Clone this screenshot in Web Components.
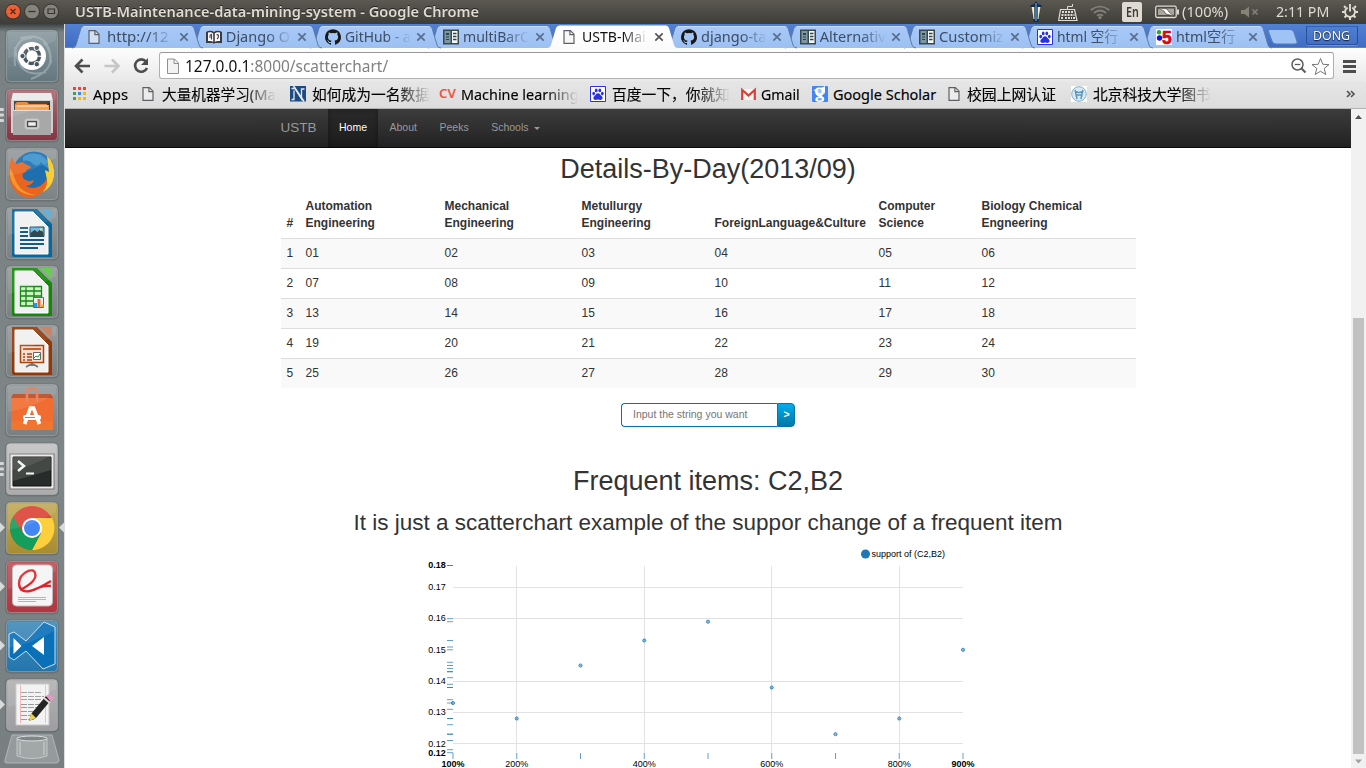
<!DOCTYPE html>
<html lang="en">
<head>
<meta charset="utf-8">
<title>USTB-Maintenance-data-mining-system</title>
<style>
html,body{margin:0;height:768px;overflow:hidden}
body{width:1366px;font-family:"Liberation Sans",Arial,sans-serif;background:#fff}
</style>
</head>
<body>
<desktop-shell></desktop-shell>
<script>
const UI = '"Noto Sans","Noto Sans CJK SC",sans-serif';
function define(name, html, ready) {
  customElements.define(name, class extends HTMLElement {
    constructor() {
      super();
      this.attachShadow({ mode: 'open' });
    }
    connectedCallback() {
      this.shadowRoot.innerHTML = typeof html === 'function' ? html(this) : html;
      if (ready) ready(this, this.shadowRoot);
    }
  });
}

/* Text squeezed or stretched horizontally to the width in its "w" attribute. */
define('fit-text', el => `<style>
:host{display:block;width:${el.getAttribute('w')}px;white-space:pre;flex:none}
span{display:inline-block;transform-origin:0 50%}
</style><span><slot></slot></span>`, (el, root) => {
  const s = root.querySelector('span');
  s.style.transform = `scaleX(${+el.getAttribute('w') / s.offsetWidth})`;
});

const DOC = `<path d="M2 1.600h6.400l3.600 3.600v9.200H2z" fill="#f4f4f4" fill-opacity=".6" stroke="#5f6063" stroke-width="1.200"/><path d="M7.900 1.600v4H12" fill="none" stroke="#5f6063" stroke-width="1.200"/>`;
const ICONS = {
  doc: DOC,
  book: `<path d="M0 3l2-1q4-1 6 1 2-2 6-1l2 1v11H9l-1 1-1-1H0z" fill="#393c40"/><path d="M2 3.500q3.500-1 5.200 1v8.200q-2-1.200-5.200-.6zM14 3.500q-3.500-1-5.200 1v8.200q2-1.200 5.200-.6z" fill="#fff"/><path d="M3.500 6.500l2-1v5M3 8h2M10.500 6q2-1 2 1t-1.500 3" stroke="#444" stroke-width="1.200" fill="none"/>`,
  github: `<path fill="#181818" d="M8 .2a8 8 0 0 0-2.530 15.590c.4.070.550-.170.550-.380v-1.490c-2.230.480-2.690-.950-2.690-.950-.360-.920-.890-1.170-.890-1.170-.730-.500.050-.490.050-.490.810.060 1.230.830 1.230.830.720 1.230 1.880.870 2.340.670.070-.520.280-.870.510-1.070-1.780-.200-3.640-.890-3.640-3.950 0-.870.310-1.590.820-2.150-.080-.200-.360-1.020.080-2.120 0 0 .670-.210 2.200.820a7.600 7.600 0 0 1 4 0c1.530-1.040 2.200-.820 2.200-.820.440 1.100.160 1.920.080 2.120.510.560.820 1.270.820 2.150 0 3.070-1.870 3.750-3.650 3.950.290.250.540.730.540 1.480v2.190c0 .210.150.460.550.380A8 8 0 0 0 8 .2z"/>`,
  panel: `<path d="M0 .5h16v15H0z" fill="#3a484d"/><path d="M1.500 2h6v12h-6z" fill="#7b98a2"/><path d="M9 2h5.500v12H9z" fill="#f4fafa"/><path d="M3 4h3v2H3zM3 7.500h3v1H3zM3 10h3v1H3z" fill="#33434a"/><path d="M10 4.500h3.500M10 7.500h3.500M10 10.500h3.500" stroke="#33434a" stroke-width="1.300"/>`,
  baidu: `<path d="M.5.5h15v15H.5z" fill="#fff" stroke="#2932e1"/><g fill="#2932e1"><ellipse cx="3.700" cy="7.600" rx="1.400" ry="1.800"/><ellipse cx="6.200" cy="4.400" rx="1.400" ry="1.900"/><ellipse cx="9.800" cy="4.400" rx="1.400" ry="1.900"/><ellipse cx="12.300" cy="7.600" rx="1.400" ry="1.800"/><path d="M8 7.200c2 0 2.500 2 4 3.300 1.300 1.500.5 3.400-1.500 3.400-1 0-1.500-.4-2.500-.4s-1.500.4-2.500.4c-2 0-2.800-1.900-1.500-3.400C5.500 9.200 6 7.200 8 7.200z"/></g>`,
  five: `<path d="M0 0h16v16H0z" fill="#fff"/><circle cx="3" cy="3.200" r="2.200" fill="#33a532"/><circle cx="3.500" cy="9" r="2.700" fill="#1111e8"/><text x="6" y="15" font-family="Liberation Sans" font-size="17.500" font-weight="bold" fill="#d40a14" stroke="#d40a14" stroke-width=".7">5</text>`,
  apps: ['#e8453c','#e8453c','#e8453c','#35a853','#4285f4','#fbb605','#35a853','#fbb605','#fbb605'].map((c, i) => `<path d="M${i % 3 * 5} ${1 + (i / 3 | 0) * 5}h3v3h-3z" fill="${c}"/>`).join(''),
  nn: `<path d="M0 0h16v15.500H0z" fill="#1d4a80"/><path d="M1.500 2.500h3.500l6.500 10.500V3h3M1.500 13.500h2.500v-9" fill="none" stroke="#dfe9f3" stroke-width="1.300"/><path d="M3.500 0L14 15.500" stroke="#dfe9f3" stroke-width="1.600"/>`,
  cv: `<text x="-1" y="12.300" font-family="Noto Sans" font-style="normal" font-weight="600" font-size="12.500" textLength="17" lengthAdjust="spacingAndGlyphs" fill="#f4513c">CV</text>`,
  gmail: `<path d="M0 3h15v11H0z" fill="#f4f4f4"/><path d="M1.200 14V4l6.300 5.500L13.800 4v10" fill="none" stroke="#d54136" stroke-width="2.200"/>`,
  scholar: `<rect width="16" height="16" rx="1" fill="#4285f4"/><path d="M1.500 4.500L5.500 1.500H10L13 0v8l-1-1.500-.5-2Q13 8.500 9.500 9.800l2.500 1.700q1.500 4.500-4.500 4.500-5.500-.5-4-3.500 1-2 3.700-2.200-4.200-.3-4.200-5.300z" fill="#fff"/><path d="M5.500 4q2-2.500 4 0 .7 3-1.500 3.500Q5.700 7.500 5.500 4z" fill="#9fc3fa"/><ellipse cx="7.700" cy="13.300" rx="2.200" ry="1.300" fill="#6fa4f8"/>`,
  lib: `<path d="M0 0h16v16H0z" fill="#fff"/><circle cx="8" cy="8" r="7.300" fill="#d9e9f3" stroke="#85afcb"/><path d="M4 4l1 4 1 5M12 4l-1 4-1 5M4.500 5.500q3.500 2 7 0M5 9h6" stroke="#5b96b8" stroke-width="1.500" fill="none"/>`
};
define('site-icon', el => `<style>:host{display:block;width:16px;height:16px;flex:none}svg{display:block;overflow:visible}</style><svg width="16" height="16">${ICONS[el.getAttribute('name')]}</svg>`);

/* ---- Top panel ---- */
define('top-panel', `<style>
:host{display:flex;height:24px;flex:none;align-items:center;background:linear-gradient(#5b5951,#3d3c37);color:#dfdbd2;font:15px/22px ${UI}}
.wm{width:75px;display:flex;gap:3px;padding-left:5px;box-sizing:border-box}
.title{font-weight:600;font-size:14.500px;flex:1;height:24px;text-shadow:0 -1px #222}
svg{display:block}
.i{display:flex;align-items:center;height:24px}
fit-text{height:24px}
.en{width:20px;height:20px;background:#dfdbd2;border-radius:2px;color:#3c3b37;font:600 14px/20px ${UI};display:flex;justify-content:center}
</style>
<div class="wm">
<svg width="16" height="24"><circle cx="8" cy="11.500" r="7.500" fill="#ed5f34" stroke="#36322e"/><path d="M5.500 9l5 5M10.500 9l-5 5" stroke="#532a1c" stroke-width="1.300"/></svg>
<svg width="16" height="24"><circle cx="8" cy="11.500" r="7.500" fill="#85837c" stroke="#34332f"/><path d="M4.500 11.500h7" stroke="#35342f" stroke-width="1.300"/></svg>
<svg width="16" height="24"><circle cx="8" cy="11.500" r="7.500" fill="#85837c" stroke="#34332f"/><path d="M5 9h6.500v4.500H5z" fill="none" stroke="#35342f" stroke-width="1.200"/></svg>
</div>
<div class="title"><fit-text w="404.500">USTB-Maintenance-data-mining-system - Google Chrome</fit-text></div>
<div class="i" style="width:28px"><svg width="13" height="24"><path d="M6 1l2 3 4 1.500L10.500 9 8.500 22h-5L1.500 9 0 5.500 4 4z" fill="#122d50"/><path d="M1.800 7l2.200 12V7M8 7v12l2.200-12" fill="#f8f0c4" stroke="#f8f0c4" stroke-width=".6"/><path d="M6 3v18" stroke="#4f88b9" stroke-width="1.600"/></svg></div>
<div class="i" style="width:32px"><svg width="20" height="24" fill="none" stroke="#dfdbd2"><path d="M2.500 9.500h14l2.500 11H.7z" stroke-width="1.200"/><path d="M9.500 9V6.500h5V4" /><path d="M4 12h12M3.500 15h13M3 18h3M7 18h7M15 18h2" stroke-dasharray="2 1" stroke-width="1.800"/></svg></div>
<div class="i" style="width:32px"><svg width="20" height="24" fill="none" stroke="#85827a" stroke-width="1.700"><path d="M.8 10Q10 3 19.200 10M4 13q6-5 12 0M7 15.800q3-2.500 6 0"/><circle cx="10" cy="17.600" r=".8"/></svg></div>
<div class="i" style="width:33px"><div class="en"><fit-text w="13">En</fit-text></div></div>
<div class="i" style="width:27px"><svg width="24" height="24"><rect x=".7" y="6.200" width="20.500" height="11.300" rx="1.500" fill="#4b4943" stroke="#dfdbd2" stroke-width="1.300"/><path d="M3 8.500h16v6.500H3z" fill="#a9a69e"/><path d="M22 9.500h2v5h-2z" fill="#dfdbd2"/><path d="M3 8l9 1 2 3 5 4-8-2-2-3z" fill="#fff" stroke="#4b4943" stroke-width=".7"/></svg></div>
<div class="i" style="width:59px"><fit-text w="46">(100%)</fit-text></div>
<div class="i" style="width:35px"><svg width="18" height="24"><path d="M0 10h3.500L8 6.500v11L3.500 14H0z" fill="#85827a"/><path d="M11.500 9.500l5 5M16.500 9.500l-5 5" stroke="#85827a" stroke-width="1.600"/></svg></div>
<div class="i" style="width:66px"><fit-text w="53">2:11 PM</fit-text></div>
<div class="i" style="width:24px"><svg width="17" height="24" fill="none" stroke="#dfdbd2"><path d="M5.600 7.600a5 5 0 1 0 4.800 0" stroke-width="1.900"/><path d="M8 4v7.500" stroke-width="1.900"/><path d="M12.300 7.700l1.600-1.600M3.700 7.700L2.100 6.100M13.300 12H16M2.700 12H0M11.500 15.500l2 2M4.500 15.500l-2 2M8 17V20" stroke-width="2.100"/></svg></div>`);

/* ---- Launcher ---- */
const office = (c, light, inner) => `<path d="M6 2h23l17 17v31H8q-2 0-2-2z" fill="${c}"/><path d="M34 2h12v12z" fill="${light}"/><path d="M28 2h6l12 12v5z" fill="#8f9596"/><path d="M28 2l18 18v-3L31 2z" fill="${c}"/><path d="M9 5h18l15 15v27H9z" fill="#f0f0f0" stroke="#fff"/>${inner}`;
const APPS = [
  ['#8b9ba1','#64777f', `<g fill="none" stroke="#b5c0c3" stroke-width="2" opacity=".55"><path d="M26 8Q6 7 9 36M9 17Q12 50 40 42M38 12Q56 38 25 49M14 8Q45 0 45 33"/></g><circle cx="26" cy="26" r="14" fill="#fff"/><circle cx="26" cy="26" r="7.500" fill="none" stroke="#49565c" stroke-width="3.400" stroke-dasharray="14.200 1.500" stroke-dashoffset="-.8"/><g fill="#49565c" stroke="#fff" stroke-width="1"><circle cx="16.500" cy="26" r="2.700"/><circle cx="30.800" cy="17.800" r="2.700"/><circle cx="30.800" cy="34.200" r="2.700"/></g>`, 0],
  ['#a76c76','#873441', `<path d="M7 4h38l2 8v32H5V12z" fill="#cfcfcf"/><path d="M7 4h38l1.500 7h-41z" fill="#eaeaea"/><path d="M8 12h36v9H8z" fill="#3c3430"/><path d="M11 13h10l2 2h18v7H9v-7z" fill="#e78130"/><path d="M9 16h34v5H9z" fill="#f7a04e"/><path d="M11 17h31" stroke="#fff0dc"/><path d="M7 21h38v25H7z" fill="#a8a8a8"/><path d="M7 21.500h38" stroke="#ddd"/><rect x="19" y="30" width="14" height="10" rx="2" fill="#ddd" stroke="#bebebe"/><path d="M21.500 32.500h9v5h-9z" fill="#eee" stroke="#4b4b4b" stroke-width="1.500"/>`, 3],
  ['#969b9d','#7d8385', `<circle cx="28" cy="24" r="20.500" fill="#1d6fb0"/><path d="M17 9q8-6 18-2 8 5 9 14-7-3-9-7-3 6-8 2-4-5-10-3z" fill="#3c93cb"/><path d="M41 8q9 8 7 21-2 10-11 15l4-12-2-10 4 2z" fill="#f8cd35"/><path d="M6 9q1 5 4 7l6-2 5 3q4 1 4 3-5 1-5 4-5 1-3 6 4 5 11 2-1 5-8 6 12 6 21-7 1 10-8 16-13 6-23-3-9-10-7-24 1-7 3-11z" fill="#e8641f"/><path d="M4 20q-2 12 7 21 8 7 19 6-16-2-21-16-2-6-5-11z" fill="#f5962e"/>`, 0],
  ['#969b9d','#7a8082', office('#0b6699','#5ca6cf', `<g stroke="#155a88" stroke-width="2"><path d="M14 21h8M14 25h8M14 29h8M14 33h24M14 37h24M14 41h18"/></g><path d="M24 20h14v9.500H24z" fill="#6dbbe5" stroke="#164c6e"/><path d="M24.500 29v-3l4-3 3 2 3-3 3 4v3z" fill="#34484d"/><circle cx="35" cy="22.500" r="1.300" fill="#f2df70"/>`), 0],
  ['#969b9d','#7a8082', office('#128a07','#58c842', `<path d="M14 20h22v20H14z" fill="#c9f7bd"/><path d="M14.500 20.500h21v19.500h-21zM14 25h22M14 30h22M14 35h22M20 20v20M28 20v20" fill="none" stroke="#18831b" stroke-width="1.300"/><path d="M27.500 31.500h10v10h-10z" fill="#eee" stroke="#666"/><path d="M28 37h3v4h-3z" fill="#209ae5"/><path d="M31.500 33h3v8h-3z" fill="#e96b2a"/><path d="M35 38.500h2.500v2.500H35z" fill="#e8b90b"/>`), 0],
  ['#969b9d','#7a8082', office('#923909','#c4795a', `<path d="M14.500 20.500h23v17h-23z" fill="#f6ded1" stroke="#a9430e" stroke-width="1.500"/><path d="M17 24h18" stroke="#c6602c" stroke-width="2"/><path d="M17 29h2M17 32h2M17 35h2M21 29h5M21 32h5M21 35h5" stroke="#a44214" stroke-width="1.700"/><path d="M27.500 27.500h7v7h-7z" fill="#fff" stroke="#666"/><path d="M28 33l2-2 2 1 2-3" fill="none" stroke="#139a24"/><path d="M26 38v3M25 39l-5 3M27 39l5 3" stroke="#777" stroke-width="2"/>`), 0],
  ['#969b9d','#7a8082', `<path d="M7 10h38l2 4H5z" fill="#b94a26"/><path d="M5 14h42v32H5z" fill="#f16c30"/><path d="M5 37h42v9H5z" fill="#f0752e"/><path d="M21 18V9q0-4.500 5-4.500T31 9v9" fill="none" stroke="#e57853" stroke-width="2.600"/><path d="M18.500 40l6-16h3l6 16" fill="none" stroke="#fff" stroke-width="3.700"/><rect x="17" y="31" width="18" height="5" rx="2" fill="#fff"/><path d="M19 33.500h10" stroke="#e97039"/>`, 0],
  ['#c3c3c3','#acacac', `<rect x="4" y="11" width="44" height="35" fill="#e8e8e8" stroke="#777"/><path d="M7 14h38v29H7z" fill="#272b29" stroke="#111"/><path d="M7 14h38v13L7 38z" fill="#626562" opacity=".5"/><path d="M12 18l6 5-6 5" fill="none" stroke="#f5f5f5" stroke-width="2.500"/><path d="M20 30.500h8" stroke="#f5f5f5" stroke-width="2"/>`, 3],
  ['#c2ad5b','#a68c32', `<circle cx="26" cy="26" r="22" fill="#dc4437"/><path d="M26 16h20a22 22 0 0 1-20 32l9-17z" fill="#fdd03b"/><path d="M7 15A22 22 0 0 0 26 48l9-17-9 4-9-4z" fill="#159e5b"/><circle cx="26" cy="26" r="10" fill="#fff"/><circle cx="26" cy="26" r="8" fill="#4387f4"/>`, 1, 1],
  ['#bd555c','#b03540', `<rect x="6.500" y="4" width="40" height="41" rx="4" fill="#f5f5f5" stroke="#bbb"/><path d="M12 36.500h28M12 38.500h28M12 40.500h18" stroke="#b5b5b5"/><path d="M14 29q18-9 15-17-1-4-7-2-9 4-9 13 1 9 11 7 6-1 21-10M27 29q10-5 18-4" fill="none" stroke="#df252e" stroke-width="2.400"/>`, 1],
  ['#438dba','#2376ad', `<path d="M3 14l5-2 12 9L38 2l11 5v37l-12 5-17-18-12 9-5-3z" fill="#0a70b8" stroke="#c9dfed"/><path d="M7.500 18l8 8-8 8zM38 17v18l-12-9z" fill="#fff"/>`, 1],
  ['#b3b2b3','#9e9da0', `<path d="M10 5h33v41H10z" fill="#f2f2f2" stroke="#c6c6c6"/><path d="M14.500 6v38" stroke="#f0b5b5"/><path d="M39.500 6v38" stroke="#bdd0e8"/><path d="M15 13.500h20M15 17.500h23M15 20.500h20M15 25.500h22M15 28.500h19M15 32.500h14M15 36.500h12M15 40.500h14" stroke="#9a9a9a" stroke-dasharray="6 1"/><path d="M25 35l15-18 5 4-15 18-7 3z" fill="#232323"/><path d="M40 17l3-2 5 4-3 4z" fill="#e59ac0"/><path d="M38 19l6 5" stroke="#ddd" stroke-width="2"/><path d="M25 34l5 5-7 3z" fill="#edd14e"/>`, 1]
];
define('launcher-tile', el => {
  const [a, b, art, pips, act] = APPS[+el.getAttribute('i')];
  const left = pips === 3 ? `<path d="M0 19h3q1 0 1 1.500T3 22H0M0 24.500h3q1 0 1 1.500T3 27.500H0M0 30h3q1 0 1 1.500T3 33H0" fill="#d4d6d6"/>` : pips ? `<path d="M0 20.500l5 5-5 5z" fill="#d9dada"/>` : '';
  return `<style>:host{display:block;height:52px;width:64px;flex:none}svg{display:block;overflow:visible}</style>
<svg width="64" height="52"><defs><linearGradient id="g" x2="0" y2="1"><stop stop-color="${a}"/><stop offset="1" stop-color="${b}"/></linearGradient></defs>
<rect x="5" y="-.5" width="54" height="54" rx="5" fill="#42494c" opacity=".28"/><rect x="6.500" y=".5" width="51" height="51" rx="4" fill="url(#g)" stroke="#c3c8ca" stroke-opacity=".38"/>
<g transform="translate(6 0)">${art}<path d="M2 2h48v8Q26 24 2 28z" fill="#fff" opacity=".09"/></g>${left}${act ? '<path d="M64 20.500l-5 5 5 5z" fill="#d9dada"/>' : ''}</svg>`;
});
define('app-launcher', `<style>
:host{display:flex;flex-direction:column;gap:7px;width:65px;flex:none;padding-top:6px;box-sizing:border-box;background:linear-gradient(#3c4244,#7a8183 8px,#7e8587 60%,#777f81);border-right:1px solid #dedede;overflow:hidden}
svg{display:block;flex:none;margin-top:-5px}
</style>${APPS.map((_, i) => `<launcher-tile i="${i}"></launcher-tile>`).join('')}
<svg width="64" height="32"><path d="M12 2h40l7 25q0 3-3 3H7q-3 0-2-3z" fill="#959b9d" stroke="#b0b5b7"/><path d="M17 5h30v18q-15 5-30 0z" fill="#a2a7a8" stroke="#c3c8c8"/><ellipse cx="32" cy="5.500" rx="15" ry="2.500" fill="#7f8587" stroke="#dcdede"/><path d="M20 9v13M44 9v13" stroke="#c9cccc" stroke-width="2" opacity=".6"/></svg>`);

/* ---- Browser chrome ---- */
define('browser-tab', el => {
  const on = el.hasAttribute('active');
  const p = 'M0 24Q3 24 4 21L9 4Q10 1.500 12.500 1.500H119Q121 1.500 122 4L127 21Q128 24 131 24';
  return `<style>
:host{display:flex;position:relative;width:118.800px;height:25px;flex:none;align-items:center;padding-left:15px;box-sizing:border-box;font:14.500px/23px ${UI};color:${on ? '#111' : '#3d4d63'};isolation:isolate}
.bg{position:absolute;left:0;top:0;z-index:-1;overflow:visible}
.t{width:66px;margin-left:4px;overflow:hidden;height:24px;-webkit-mask:linear-gradient(90deg,#000 62%,transparent);mask:linear-gradient(90deg,#000 62%,transparent)}
.x{width:10px;height:10px;margin-left:5.500px}
</style><svg class="bg" width="131" height="25"><defs><linearGradient id="g" x2="0" y2="1"><stop stop-color="${on ? '#fff' : '#a9cafa'}"/><stop offset="1" stop-color="${on ? '#fbfbfb' : '#9bc0f2'}"/></linearGradient></defs><path d="${p}${on ? 'V25H0' : ''}" fill="url(#g)" ${on ? '' : 'stroke="#5f7ca8" stroke-width="1"'}/>${on ? '' : '<path d="M12 2.500H119" stroke="#c5dcfb"/>'}</svg>
<site-icon name="${el.getAttribute('icon')}"></site-icon><div class="t"><fit-text w="${el.getAttribute('w')}"><slot></slot></fit-text></div>
<svg class="x" viewBox="0 0 10 10"><path d="M1.300 1.300l7.400 7.400M8.700 1.300l-7.400 7.400" stroke="${on ? '#555' : '#5a6e8c'}" stroke-width="1.700"/></svg>`;
});
const TABS = [['doc','http://12',62],['book','Django O',64],['github','GitHub - a',66],['panel','multiBarC',66],['doc','USTB-Mai',64],['github','django-ta',65],['panel','Alternativ',66],['panel','Customiz',64],['baidu','html 空行',61],['five','html空行',60]];
define('tab-strip', `<style>
:host{display:flex;height:24px;flex:none;padding-left:7px;background:linear-gradient(#5280d2,#3e6cc2);position:relative;z-index:1;box-shadow:inset 0 -1px #6583b3}
.new{display:block;margin-left:7px;flex:none;position:relative}
.user{width:50px;height:17px;margin:2px 0 0 7px;border:1px solid #284f9c;border-top-color:#3462b4;border-radius:0 0 3px 3px;box-shadow:0 1px #6e96dd;display:flex;justify-content:center;font:12px/18px ${UI};color:#fff;text-shadow:0 1px 1px #123,0 0 1px #123}
</style>${TABS.map((t, i) => `<browser-tab icon="${t[0]}" w="${t[2]}" ${i === 4 ? 'active' : ''} style="z-index:${i === 4 ? 30 : 20 - i}">${t[1]}</browser-tab>`).join('')}
<svg class="new" width="32" height="24"><path d="M3 5.500h20q3 0 4 3l3 9q1 2.500-2 2.500H9q-3 0-4-3L1.500 7.500Q1 5.500 3 5.500z" fill="#9fc3f5" stroke="#557db9"/></svg>
<div class="user"><fit-text w="37">DONG</fit-text></div>`);
define('tool-bar', `<style>
:host{display:flex;height:33px;flex:none;align-items:center;background:linear-gradient(#fdfdfd,#e9e9e9);box-sizing:border-box}
.nav{width:94px;flex:none;display:block}
.omni{display:flex;align-items:center;width:1175px;height:27px;box-sizing:border-box;border:1px solid #b0b0b0;border-top-color:#999;border-radius:3px;background:#fff;margin-top:2px;font:15.500px/24px ${UI};color:#808080;flex:none}
.omni fit-text{margin-left:-1px}
b{font-weight:400;color:#111}
.sp{flex:1}
svg{display:block}
</style>
<svg class="nav" width="94" height="33" fill="none" stroke-width="2.600"><path d="M25 18H12M17.500 11.500L11 18l6.500 6.500" stroke="#4d4d4d"/><path d="M39.500 18H52M47 11.500l6.500 6.500-6.500 6.500" stroke="#c6c6c6"/><path d="M81 13.500a6.200 6.200 0 1 0 1 6.500" stroke="#4d4d4d"/><path d="M83 10v7h-7z" fill="#4d4d4d"/></svg>
<div class="omni"><svg width="26" height="24"><path d="M7.500 5h7l4 4v10.500h-11z" fill="#f3f3f3" stroke="#909090"/><path d="M14 5v4.500h4.500" fill="none" stroke="#909090"/></svg><fit-text w="203"><b>127.0.0.1</b>:8000/scatterchart/</fit-text><div class="sp"></div>
<svg width="43" height="24" fill="none" stroke="#5d5d5d"><circle cx="7.500" cy="10.500" r="5.500" stroke-width="1.500"/><path d="M4.700 10.500h5.600" stroke-width="1.300"/><path d="M11.500 14.500l4 4" stroke-width="2.200"/><path d="M30.500 4.500l2.300 5.800 6.200.3-4.800 3.900 1.600 6-5.300-3.300-5.300 3.300 1.600-6-4.800-3.900 6.200-.3z" stroke="#777"/></svg></div>
<svg width="30" height="33"><path d="M9 13.500h13M9 18.500h13M9 23.500h13" stroke="#4d4d4d" stroke-width="3"/></svg>`);
const MARKS = [['apps','Apps',20,35,70],['doc','大量机器学习(Ma',20.500,114,147],['nn','如何成为一名数据',22,118,150],['cv','Machine learning',21,117,150],['baidu','百度一下，你就知',22,118,151],['gmail','Gmail',20,39,71],['scholar','Google Scholar',21,103,137],['doc','校园上网认证',20,89,122],['lib','北京科技大学图书',22,118,145]];
define('bookmark-bar', `<style>
:host{display:flex;height:27px;flex:none;align-items:center;padding-left:8px;background:linear-gradient(#e6e6e6,#dcdcdc);border-bottom:1px solid #b4b4b4;font:14.500px/24px ${UI};color:#000}
.m{display:flex;align-items:center;flex:none;height:25px;margin-bottom:2px}
site-icon{margin-top:1px}
fit-text{-webkit-text-stroke:.15px #000}
.f{-webkit-mask:linear-gradient(90deg,#000 72%,transparent);mask:linear-gradient(90deg,#000 72%,transparent)}
i{display:block;flex:none;font-style:normal}
.more{margin-left:auto;width:16px;margin-right:4px}
</style>${MARKS.map((m, i) => `<div class="m" style="width:${m[4]}px"><i style="width:${m[2]}px${m[0] === 'doc' ? ';margin-left:-2px' : ''}"><site-icon name="${m[0]}"></site-icon></i><fit-text w="${m[3]}" ${[1,2,3,4,8].includes(i) ? 'class="f"' : ''}>${m[1]}</fit-text></div>`).join('')}
<svg class="more" width="16" height="20"><path d="M1 6l3 3-3 3M5 6l3 3-3 3" fill="none" stroke="#555" stroke-width="1.700"/></svg>`);

/* ---- Web page ---- */
define('nav-bar', `<style>
:host{display:flex;height:38px;flex:none;border-bottom:1px solid #080808;background:linear-gradient(#3c3c3c,#222);padding-left:204.250px;font:10.500px/37px "Liberation Sans",sans-serif;color:#999}
.brand{font-size:13.500px;padding:0 11.250px}
span{padding:0 11.250px}
.on{color:#fff;background:linear-gradient(#2a2a2a,#1c1c1c);box-shadow:inset 0 0 5px rgba(0,0,0,.35)}
i{display:inline-block;border:3px solid transparent;border-top-color:#999;border-bottom:0;margin-left:5px;vertical-align:1px}
</style><span class="brand">USTB</span><span class="on">Home</span><span>About</span><span>Peeks</span><span>Schools<i></i></span>`);
const HEAD = ['#','Automation<br>Engineering','Mechanical<br>Engineering','Metullurgy<br>Engineering','ForeignLanguage&amp;Culture','Computer<br>Science','Biology Chemical<br>Engneering'];
const COLS = [18.500,139,137,133,164,103,160.500];
define('day-table', `<style>
:host{display:block;width:855px;margin-top:8px}
table{width:855px;table-layout:fixed;border-collapse:separate;border-spacing:0;font-size:12px;line-height:17px;color:#333}
th,td{padding:6px 5.500px 6px 6.500px;text-align:left;vertical-align:bottom}
th:first-child,td:first-child{padding-left:6px}
td{border-top:1px solid #ddd;height:17px}
tr:nth-child(odd) td{background:#f9f9f9}
</style><table><colgroup>${COLS.map(w => `<col style="width:${w}px">`).join('')}</colgroup><thead><tr>${HEAD.map(h => `<th>${h}</th>`).join('')}</tr></thead><tbody>${[0,1,2,3,4].map(r => `<tr><td>${r + 1}</td>${[1,2,3,4,5,6].map(c => `<td>${String(r * 6 + c).padStart(2, '0')}</td>`).join('')}</tr>`).join('')}</tbody></table>`);
define('search-box', `<style>
:host{display:flex;width:174px;height:24px;margin-top:15px;flex:none}
input{width:156px;box-sizing:border-box;border:1px solid #0076a3;border-right:0;border-radius:4px 0 0 4px;padding:0 0 2px 11px;font:10.500px "Liberation Sans";background:#fff;outline:0}
input::placeholder{color:#757575;opacity:1}
button{width:18px;border:1px solid #0076a3;border-radius:0 4px 4px 0;background:linear-gradient(#00adee,#0078a5);color:#fff;font:bold 10.500px "Liberation Sans";padding:0 0 2px 1px}
</style><input placeholder="Input the string you want"><button>&gt;</button>`);
define('scatter-chart', () => {
  const X = n => 453 + (n - 1) * 63.750;
  const pts = [703,718.500,665.500,640.500,621.700,687.500,734.200,718.500,649.800];
  const dist = [565.500,618.700,621.700,640.500,647,649.800,662.300,665.500,668.500,671.700,671.700,677.700,684.300,687.500,687.500,699.700,703,709.300,718.500,718.500,724.700,734.200,734.200,740.500,749.700,752.700,565.500];
  const labels = [['0.18',565.500,1],['0.17',587.500],['0.16',618.700],['0.15',650],['0.14',681.300],['0.13',712.500],['0.12',743.800],['0.12',753,1]];
  return `<style>:host{display:block;width:600px;height:228px;flex:none}svg{display:block}text{font:9px "Liberation Sans",sans-serif;fill:#000}.b{font-weight:bold}</style>
<svg width="600" height="228" viewBox="408 540 600 228">
<g stroke="#e2e2e2">${[587.500,618.500,681.500,712.500,743.500].map(y => `<path d="M453 ${y}H963"/>`).join('')}${[2,4,6,8].map(n => `<path d="M${Math.floor(X(n)) + .5} 566V753"/>`).join('')}</g>
<g stroke="#1f77b4" stroke-opacity=".7">${dist.map(y => `<path d="M447 ${y}h6"/>`).join('')}${pts.map((_, i) => `<path d="M${X(i + 1)} 753v6"/>`).join('')}</g>
<g fill="#1f77b4" fill-opacity=".5" stroke="#1f77b4" stroke-opacity=".75">${pts.map((y, i) => `<circle cx="${X(i + 1)}" cy="${y}" r="1.600"/>`).join('')}</g>
<g text-anchor="end">${labels.map(l => `<text x="445.700" y="${l[1] + 2.700}" ${l[2] ? 'class="b"' : ''}>${l[0]}</text>`).join('')}</g>
<g text-anchor="middle">${[1,2,4,6,8,9].map(n => `<text x="${X(n)}" y="767" ${n === 1 || n === 9 ? 'class="b"' : ''}>${n}00%</text>`).join('')}</g>
<circle cx="865.500" cy="554" r="4.500" fill="#1f77b4"/><text x="871.500" y="557">support of (C2,B2)</text></svg>`;
});
define('scroll-bar', `<style>:host{display:flex;flex-direction:column;width:15px;background:#f1f1f1;flex:none}
svg{display:block;flex:none}.thumb{width:11px;margin:0 2px;background:#c1c1c1;height:436px;margin-top:194px;flex:none}</style>
<svg width="15" height="15"><path d="M4 10h7L7.500 6z" fill="#505050"/></svg><div class="thumb"></div><svg width="15" height="14"><path d="M4 5.500h7L7.500 9.500z" fill="#a0a0a0"/></svg>`);
define('web-page', `<style>
:host{display:flex;flex:1;min-height:0;overflow:hidden;background:#fff}
.main{width:1286px;display:flex;flex-direction:column;flex:none;color:#333}
.c{display:flex;flex-direction:column;align-items:center}
h1,h2{margin:0;font-weight:400}
h1{font-size:27px;line-height:30px;margin-top:6px}
.second{margin-top:39px}
h2{font-size:22.500px;line-height:25px;margin-top:14px;margin-bottom:5px}
</style><div class="main"><nav-bar></nav-bar><div class="c"><h1>Details-By-Day(2013/09)</h1><day-table></day-table><search-box></search-box><h1 class="second">Frequent items: C2,B2</h1><h2>It is just a scatterchart example of the suppor change of a frequent item</h2><scatter-chart></scatter-chart></div></div><scroll-bar></scroll-bar>`);
define('browser-window', `<style>:host{display:flex;flex-direction:column;flex:1;min-width:0;overflow:hidden}</style><tab-strip></tab-strip><tool-bar></tool-bar><bookmark-bar></bookmark-bar><web-page></web-page>`);
define('desktop-shell', `<style>:host{display:flex;flex-direction:column;width:1366px;height:768px;overflow:hidden}.row{display:flex;flex:1;min-height:0}</style><top-panel></top-panel><div class="row"><app-launcher></app-launcher><browser-window></browser-window></div>`);
</script>
</body>
</html>
